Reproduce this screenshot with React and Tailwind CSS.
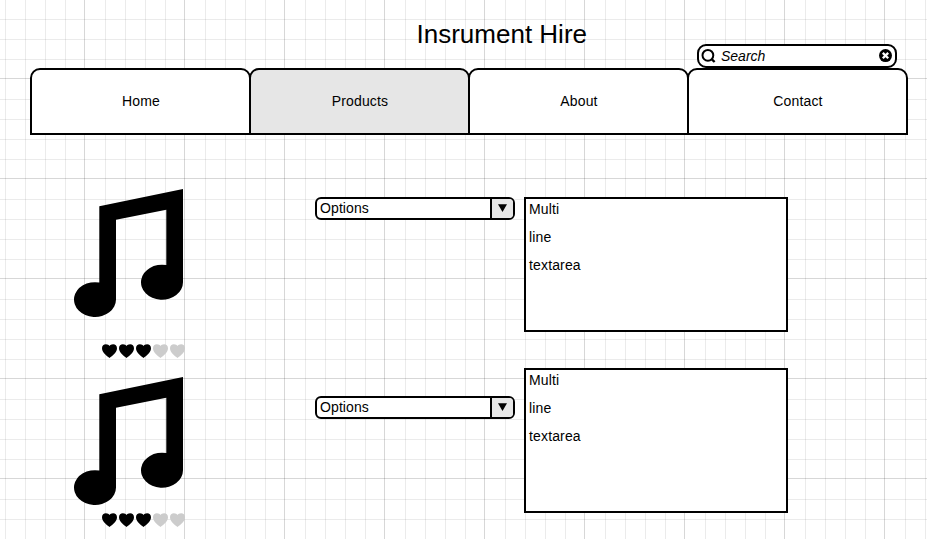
const TABS = ["Home", "Products", "About", "Contact"];

const GRID =
  "bg-[linear-gradient(90deg,#00000028_0_1px,transparent_1px_21px,#00000014_21px_22px,transparent_22px_41px,#00000014_41px_42px,transparent_42px_61px,#00000014_61px_62px,transparent_62px_81px,#00000014_81px_82px,transparent_82px),linear-gradient(180deg,#00000028_0_1px,transparent_1px_21px,#00000014_21px_22px,transparent_22px_41px,#00000014_41px_42px,transparent_42px_61px,#00000014_61px_62px,transparent_62px_81px,#00000014_81px_82px,transparent_82px)] bg-[length:100px_100px] bg-[position:84px_78px]";

function SearchBox() {
  return (
    <div className="flex h-6 w-[200px] items-center rounded-[9px] border-2 border-black bg-white">
      <svg className="ml-[2px] shrink-0" width="15" height="16" viewBox="0 0 15 16" fill="none" stroke="#000">
        <circle cx="6.9" cy="7.3" r="5.4" strokeWidth="2" />
        <path d="M10.4 10.9 L13.6 14" strokeWidth="2.4" />
      </svg>
      <span className="ml-[5px] flex-1 text-[14px] leading-4 italic">Search</span>
      <svg className="mr-[3px] shrink-0" width="13" height="14" viewBox="0 0 13 14">
        <circle cx="6.5" cy="6.6" r="6.5" fill="#000" />
        <path d="M3.8 3.9 L9.2 9.3 M9.2 3.9 L3.8 9.3" stroke="#fff" strokeWidth="2.3" />
      </svg>
    </div>
  );
}

function MusicNote({ className }) {
  return (
    <svg className={className} width="109" height="128" viewBox="0 0 109 128">
      <path d="M25.3 17.3 L109 0 V93.3 A21 17.5 0 1 1 92.3 76.1 V20.7 L42 30.7 V110.6 A21 17.4 0 1 1 25.3 93.5 Z" />
    </svg>
  );
}

function Rating({ className }) {
  return (
    <div className={`flex gap-[2px] ${className}`}>
      {[1, 2, 3, 4, 5].map((n) => (
        <svg key={n} width="15" height="14" viewBox="0 0 15 14" className={n <= 3 ? "fill-black" : "fill-[#ccc]"}>
          <path d="M7.5 14 C5.7 12 0 9.2 0 4.2 C0 1.8 1.7 0.2 3.9 0.2 C5.6 0.2 6.9 0.9 7.5 2 C8.1 0.9 9.4 0.2 11.1 0.2 C13.3 0.2 15 1.8 15 4.2 C15 9.2 9.3 12 7.5 14 Z" />
        </svg>
      ))}
    </div>
  );
}

function Product({ className, noteClass, ratingClass, selectClass, areaClass }) {
  return (
    <section className={`flex items-start pl-[74px] ${className}`}>
      <div className="w-[241px]">
        <MusicNote className={`block ${noteClass}`} />
        <Rating className={`ml-7 ${ratingClass}`} />
      </div>
      <div className={`flex h-[23px] w-[200px] overflow-hidden rounded-[6px] border-2 border-black bg-white ${selectClass}`}>
        <span className="flex-1 pl-[3px] text-[14px] leading-[19px] tracking-[0.1px]">Options</span>
        <div className="flex w-[23px] items-center justify-center border-l-2 border-black bg-[#e6e6e6]">
          <svg className="-mt-px mr-px" width="9" height="8" viewBox="0 0 9 8">
            <path d="M0 0.3 H9 L4.5 8 Z" />
          </svg>
        </div>
      </div>
      <div className={`ml-[9px] w-[264px] border-2 border-black bg-white pl-[3px] text-[14px] leading-7 tracking-[0.15px] ${areaClass}`}>
        <p className="-mt-1">Multi</p>
        <p>line</p>
        <p>textarea</p>
      </div>
    </section>
  );
}

export default function App() {
  return (
    <main className={`h-[539px] w-[927px] overflow-hidden bg-white font-['Liberation_Sans',Arial,sans-serif] text-black ${GRID}`}>
      <header className="flex h-[68px] justify-end pr-[30px]">
        <h1 className="mt-[18px] mr-[110px] text-[26px] leading-8 whitespace-nowrap">Insrument Hire</h1>
        <div className="mt-11">
          <SearchBox />
        </div>
      </header>
      <nav className="flex h-[67px] pl-[30px]">
        {TABS.map((tab) => (
          <div
            key={tab}
            className={`mr-[-2px] flex w-[221px] items-center justify-center rounded-t-[10px] border-2 border-black pl-px text-[14px] tracking-[0.15px] ${
              tab === "Products" ? "bg-[#e6e6e6]" : "bg-white"
            }`}
          >
            {tab}
          </div>
        ))}
      </nav>
      <Product
        className="mt-[54px] h-[179px]"
        noteClass="mt-0"
        ratingClass="mt-[27px]"
        selectClass="mt-2"
        areaClass="mt-2 h-[135px]"
      />
      <Product
        className="h-[171px]"
        noteClass="mt-[9px]"
        ratingClass="mt-2"
        selectClass="mt-7"
        areaClass="h-[145px]"
      />
    </main>
  );
}
